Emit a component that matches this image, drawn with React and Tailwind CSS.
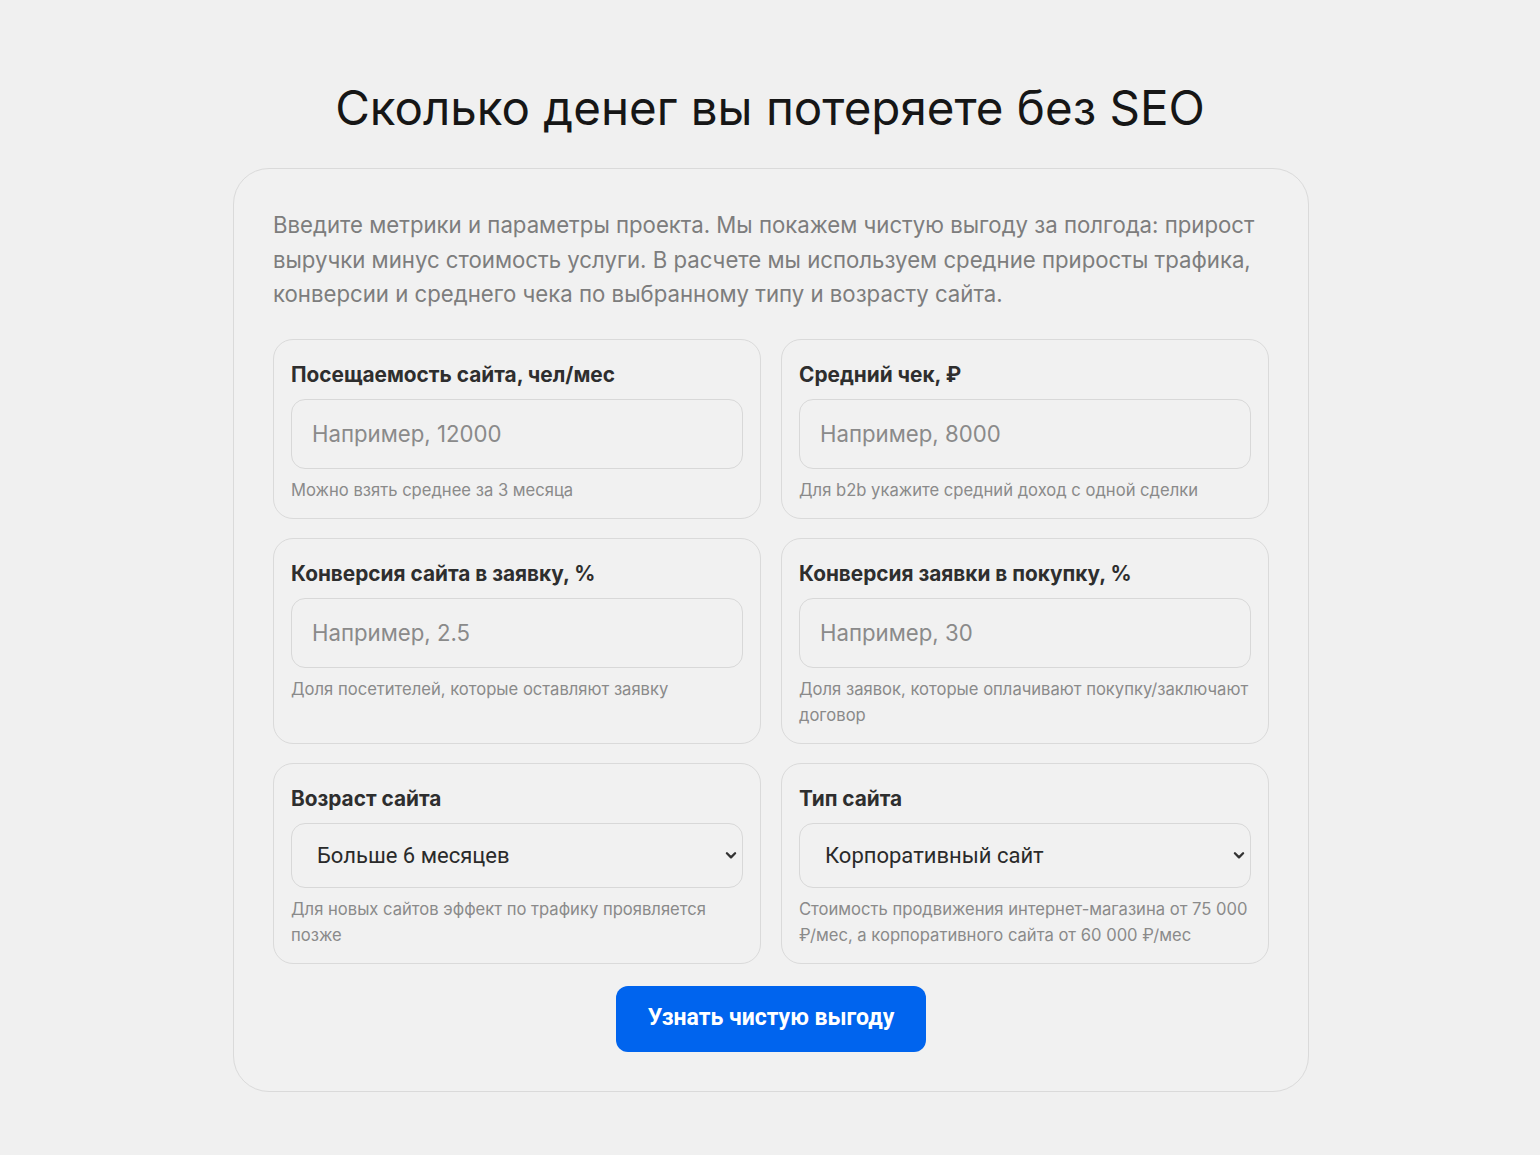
import { useState } from 'react';

const fields = [
  { label: 'Посещаемость сайта, чел/мес', placeholder: 'Например, 12000', hint: 'Можно взять среднее за 3 месяца' },
  { label: 'Средний чек, ₽', placeholder: 'Например, 8000', hint: 'Для b2b укажите средний доход с одной сделки' },
  { label: 'Конверсия сайта в заявку, %', placeholder: 'Например, 2.5', hint: 'Доля посетителей, которые оставляют заявку' },
  { label: 'Конверсия заявки в покупку, %', placeholder: 'Например, 30', hint: 'Доля заявок, которые оплачивают покупку/заключают договор' },
];

const selects = [
  {
    label: 'Возраст сайта',
    options: ['Больше 6 месяцев', 'Меньше 6 месяцев'],
    hint: 'Для новых сайтов эффект по трафику проявляется позже',
  },
  {
    label: 'Тип сайта',
    options: ['Корпоративный сайт', 'Интернет-магазин'],
    hint: 'Стоимость продвижения интернет-магазина от 75 000 ₽/мес, а корпоративного сайта от 60 000 ₽/мес',
  },
];

function Chevron() {
  return (
    <svg width="14" height="14" viewBox="0 0 24 24" fill="none" stroke="#333" strokeWidth="4" strokeLinecap="round" strokeLinejoin="round">
      <path d="M5 9l7 7 7-7" />
    </svg>
  );
}

export default function App() {
  const [values, setValues] = useState({});

  return (
    <div className="min-h-screen bg-[#f0f0f0] pt-[78px] pb-16 font-['Inter',sans-serif]">
      <h1 className="text-center text-[47.5px] leading-[60px] text-[#161616] font-normal mb-[30px] font-['Inter',sans-serif]">
        Сколько денег вы потеряете без SEO
      </h1>

      <div className="mx-auto w-[1076px] translate-x-[1px] rounded-[36px] border border-[#dadada] bg-[#f1f1f1] px-[39px] pt-[39px] pb-[39px]">
        <p className="text-[22.2px] leading-[34.5px] text-[#7d7d7d]">
          Введите метрики и параметры проекта. Мы покажем чистую выгоду за полгода: прирост выручки минус стоимость услуги. В расчете мы используем средние приросты трафика, конверсии и среднего чека по выбранному типу и возрасту сайта.
        </p>

        <div className="mt-[27px] grid grid-cols-2 gap-x-[20px] gap-y-[19px]">
          {fields.map((f, i) => (
            <div key={i} className="rounded-[20px] border border-[#dadada] px-[17px] pt-[21px] pb-[15px]">
              <div className="text-[20.8px] leading-[28px] font-bold text-[#2e2e2e]">{f.label}</div>
              <input
                type="text"
                placeholder={f.placeholder}
                value={values[i] || ''}
                onChange={(e) => setValues({ ...values, [i]: e.target.value })}
                className="mt-[10px] block w-full h-[70px] rounded-[14px] border border-[#d8d8d8] bg-[#f1f1f1] px-[20px] text-[22.2px] text-[#333] placeholder:text-[#8a8a8a] outline-none"
              />
              <div className="mt-[8px] text-[16.6px] leading-[26px] text-[#8a8a8a]">{f.hint}</div>
            </div>
          ))}
          {selects.map((s, i) => (
            <div key={i} className="rounded-[20px] border border-[#dadada] px-[17px] pt-[21px] pb-[15px]">
              <div className="text-[20.8px] leading-[28px] font-bold text-[#2e2e2e]">{s.label}</div>
              <div className="relative mt-[10px]">
                <select className="block w-full h-[65px] appearance-none rounded-[14px] border border-[#d8d8d8] bg-[#f1f1f1] pl-[25px] pr-[40px] text-[22px] text-[#2a2a2a] outline-none font-['Roboto',sans-serif]">
                  {s.options.map((o) => (
                    <option key={o}>{o}</option>
                  ))}
                </select>
                <div className="pointer-events-none absolute right-[5px] top-1/2 -translate-y-1/2">
                  <Chevron />
                </div>
              </div>
              <div className="mt-[8px] text-[16.6px] leading-[26px] text-[#8a8a8a]">{s.hint}</div>
            </div>
          ))}
        </div>

        <div className="mt-[22px] flex justify-center">
          <button className="h-[66px] w-[310px] rounded-[12px] bg-[#0064ee] text-[23px] font-bold text-white font-['Roboto',sans-serif]">
            Узнать чистую выгоду
          </button>
        </div>
      </div>
    </div>
  );
}
